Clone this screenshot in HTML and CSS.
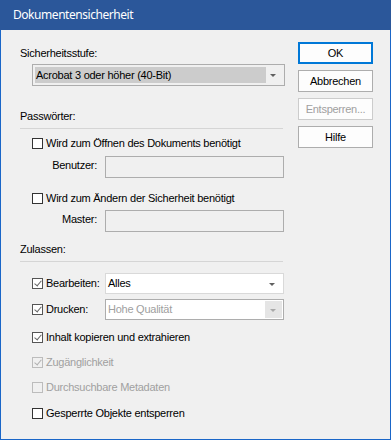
FILE: index.html
```html
<!DOCTYPE html>
<html lang="de">
<head>
<meta charset="utf-8">
<title>Dokumentensicherheit</title>
<link rel="stylesheet" href="styles.css">
</head>
<body>
<div class="window">
  <div class="titlebar">Dokumentensicherheit</div>
  <div class="frame">
    <div class="left">
      <div class="label first">Sicherheitsstufe:</div>
      <div class="combo level">
        <span class="sel">Acrobat 3 oder höher (40-Bit)</span>
        <span class="arrow"></span>
      </div>

      <div class="label section">Passwörter:</div>
      <div class="sep"></div>

      <div class="cbrow r1"><span class="box"></span><span>Wird zum Öffnen des Dokuments benötigt</span></div>
      <div class="field r-user"><span class="flabel">Benutzer:</span><span class="input"></span></div>

      <div class="cbrow r2"><span class="box"></span><span>Wird zum Ändern der Sicherheit benötigt</span></div>
      <div class="field r-master"><span class="flabel">Master:</span><span class="input"></span></div>

      <div class="label section2">Zulassen:</div>
      <div class="sep"></div>

      <div class="permrow p1">
        <div class="cbrow"><span class="box checked"></span><span>Bearbeiten:</span></div>
        <div class="combo edit"><span class="val">Alles</span><span class="arrow"></span></div>
      </div>
      <div class="permrow p2">
        <div class="cbrow"><span class="box checked"></span><span>Drucken:</span></div>
        <div class="combo print"><span class="val dim">Hohe Qualität</span><span class="dropbtn"><span class="arrow light"></span></span></div>
      </div>
      <div class="cbrow r3"><span class="box checked"></span><span>Inhalt kopieren und extrahieren</span></div>
      <div class="cbrow r4 disabled"><span class="box checked"></span><span>Zugänglichkeit</span></div>
      <div class="cbrow r5 disabled"><span class="box"></span><span>Durchsuchbare Metadaten</span></div>
      <div class="cbrow r6"><span class="box"></span><span>Gesperrte Objekte entsperren</span></div>
    </div>
    <div class="buttons">
      <div class="btn default">OK</div>
      <div class="btn">Abbrechen</div>
      <div class="btn disabled">Entsperren...</div>
      <div class="btn">Hilfe</div>
    </div>
  </div>
</div>
</body>
</html>
```
FILE: styles.css
```css
* { box-sizing: border-box; }
html, body { margin: 0; padding: 0; background: #f0f0f0; }
body {
  font-family: "Liberation Sans", Arial, sans-serif;
  font-size: 11px;
  letter-spacing: -0.25px;
  color: #000;
}
.window { width: 391px; height: 440px; display: flex; flex-direction: column; }
.titlebar {
  height: 30px;
  background: #2b579a;
  color: #fff;
  font-family: "Noto Sans", sans-serif;
  font-size: 12px;
  letter-spacing: -0.45px;
  line-height: 30px;
  padding-left: 13px;
}
.frame {
  flex: 1;
  display: flex;
  border: 1px solid #1a66c8;
  border-top: 0;
  padding-left: 19px;
}
.left { width: 265px; display: flex; flex-direction: column; }
.label { line-height: 13px; height: 13px; }
.label.first { margin-top: 17px; }
.label.section { margin-top: 24px; }
.label.section2 { margin-top: 11px; }
.sep { height: 1px; background: #d5d5d5; width: 263px; margin-top: 5px; }

.combo {
  position: relative;
  border: 1px solid #adadad;
  display: flex;
  align-items: center;
}
.combo.level {
  margin: 4px 0 0 12px;
  width: 253px;
  height: 22px;
  background: #f0f0f0;
  padding: 2px 18px 2px 2px;
}
.combo.level .sel {
  flex: 1;
  height: 100%;
  background: #cccccc;
  line-height: 16px;
  padding-left: 1px;
}
.arrow {
  position: absolute;
  right: 8px;
  top: 50%;
  margin-top: -1px;
  width: 0; height: 0;
  border-left: 3px solid transparent;
  border-right: 3px solid transparent;
  border-top: 3px solid #606060;
}
.arrow.light { border-top-color: #a8a8a8; right: 6px; }

.cbrow {
  display: flex;
  align-items: center;
  line-height: 13px;
  height: 13px;
  padding-left: 12px;
}
.box {
  width: 11px; height: 11px;
  border: 1px solid #333;
  background: #fff;
  margin-right: 3px;
  flex: none;
  position: relative;
}
.box.checked { border-color: #555; }
.box.checked::after {
  content: "";
  position: absolute;
  left: 3px; top: 0px;
  width: 3px; height: 6px;
  border-right: 1px solid #666;
  border-bottom: 1px solid #666;
  transform: rotate(40deg);
}
.cbrow.disabled { color: #a0a0a0; }
.cbrow.disabled .box { border-color: #bcbcbc; background: #f0f0f0; }
.cbrow.disabled .box.checked::after { border-color: #b0b0b0; }

.r1 { margin-top: 8px; }
.r2 { margin-top: 14px; }
.field { display: flex; height: 22px; margin-top: 6px; }
.r-master { margin-top: 5px; }
.flabel {
  width: 81px;
  text-align: right;
  padding-right: 4px;
  line-height: 13px;
  margin-top: 3px;
}
.input {
  width: 179px;
  height: 22px;
  margin-left: 4px;
  border: 1px solid #adadad;
  background: #f0f0f0;
}

.permrow { display: flex; align-items: center; height: 21px; }
.permrow .cbrow { width: 85px; }
.p1 { margin-top: 11px; }
.p2 { margin-top: 5px; }
.combo.edit, .combo.print {
  width: 179px;
  height: 21px;
  background: #fff;
  padding-left: 2px;
}
.combo.edit { border-color: #d9d9d9; }
.combo .val { line-height: 13px; }
.combo .val.dim { color: #a0a0a0; }
.dropbtn {
  position: absolute;
  right: 1px; top: 1px; bottom: 1px;
  width: 17px;
  background: #e5e5e5;
}

.r3 { margin-top: 11px; }
.r4 { margin-top: 12px; }
.r5 { margin-top: 12px; }
.r6 { margin-top: 13px; }

.buttons {
  margin-left: 13px;
  margin-top: 12px;
  display: flex;
  flex-direction: column;
  gap: 6px;
}
.btn {
  width: 75px;
  height: 22px;
  border: 1px solid #adadad;
  background: #fdfdfd;
  text-align: center;
  line-height: 20px;
}
.btn.default { border: 2px solid #0078d7; line-height: 18px; }
.btn.disabled { color: #a0a0a0; border-color: #cccccc; }
```
